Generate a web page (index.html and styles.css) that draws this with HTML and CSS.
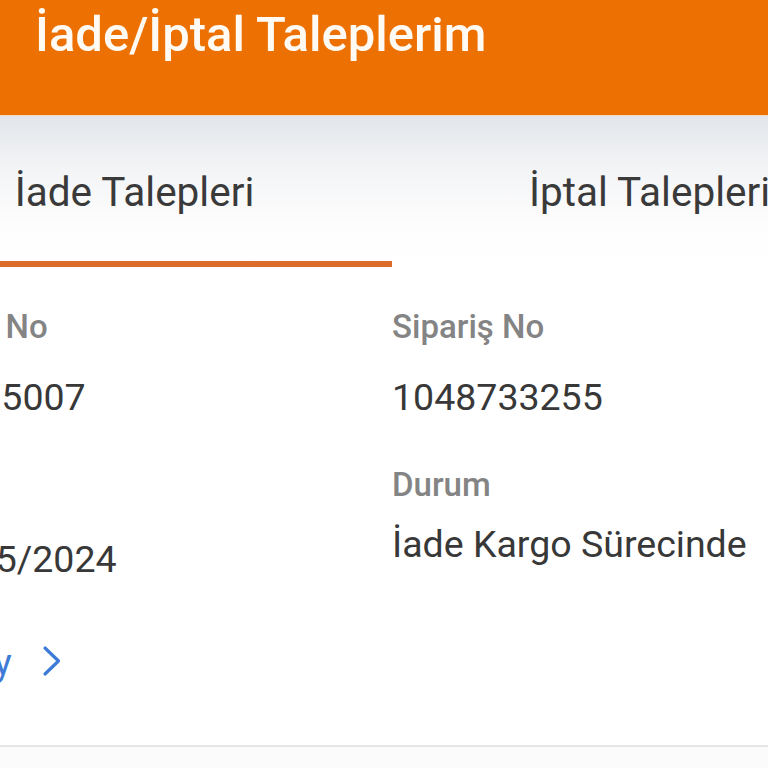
FILE: index.html
```html
<!DOCTYPE html>
<html lang="tr">
<head>
  <meta charset="UTF-8">
  <meta name="viewport" content="width=device-width, initial-scale=1.0">
  <title>İade/İptal Taleplerim</title>
  <link rel="stylesheet" href="styles.css">
</head>
<body>
<div class="screen">
  <header class="app-header">
    <h1>İade/İptal Taleplerim</h1>
  </header>

  <nav class="tabs">
    <div class="tab active">İade Talepleri</div>
    <div class="tab">İptal Talepleri</div>
  </nav>

  <section class="request-card">
    <div class="details">
      <div class="field">
        <span class="field-label">Talep No</span>
        <span class="field-value">10715007</span>
      </div>
      <div class="field">
        <span class="field-label">Sipariş No</span>
        <span class="field-value">1048733255</span>
      </div>
      <div class="field">
        <span class="field-label">Tarih</span>
        <span class="field-value low">12/05/2024</span>
      </div>
      <div class="field">
        <span class="field-label">Durum</span>
        <span class="field-value tight">İade Kargo Sürecinde</span>
      </div>
    </div>

    <a class="detail-link" href="#">
      Detay
      <svg class="chevron" width="20" height="32" viewBox="0 0 20 32">
        <path d="M3 3 L16.5 16 L3 29" fill="none" stroke="currentColor" stroke-width="3.2" stroke-linecap="round" stroke-linejoin="round"/>
      </svg>
    </a>
  </section>
</div>
</body>
</html>
```

FILE: styles.css
```css
* {
  box-sizing: border-box;
  margin: 0;
  padding: 0;
}
:root {
  --orange: #ed7002;
  --orange-line: #dc6b2a;
  --text: #383838;
  --label: #848484;
  --link: #3d7bd6;
  --divider: #e6e6e6;
}

body {
  font-family: Roboto, "Noto Sans", sans-serif;
  background-color: #fbfbfb;
  color: var(--text);
  width: 768px;
  height: 768px;
  overflow: hidden;
}

/* the phone screen is wider than the visible crop */
.screen {
  width: 1030px;
  margin-left: -123px;
}

.app-header {
  height: 115px;
  background-color: var(--orange);
  padding: 6px 0 0 158px;
}

.app-header h1 {
  font-size: 49px;
  line-height: 58px;
  font-weight: 500;
  color: #fffaf3;
}

.tabs {
  display: flex;
  background: linear-gradient(to bottom, #e2e6ea 0, #f3f4f6 35%, #fdfdfd 70%, #fff 100%);
  border-top: 1px solid #f3d7c2;
}

.tab {
  flex: 1;
  text-align: center;
  font-size: 40.5px;
  line-height: 48px;
  color: #3a3a3a;
  padding: 52px 0 51px;
}

.tab.active {
  padding-bottom: 45px;
  border-bottom: 6px solid var(--orange-line);
}

.request-card {
  background-color: #fff;
  padding: 40px 40px 61px;
  border-bottom: 2px solid var(--divider);
}

.details {
  display: grid;
  grid-template-columns: 1fr 1fr;
  row-gap: 46px;
}

.field {
  display: flex;
  flex-direction: column;
  align-items: flex-start;
}

.field-label {
  font-size: 33px;
  line-height: 40px;
  font-weight: 500;
  color: var(--label);
}

.field-value {
  font-size: 37.5px;
  line-height: 44px;
  color: var(--text);
  margin-top: 28px;
}

.field-value.low {
  margin-top: 32px;
}

.field-value.tight {
  margin-top: 17px;
}

.detail-link {
  display: flex;
  align-items: center;
  gap: 30px;
  margin-top: 59px;
  font-size: 37.5px;
  line-height: 44px;
  color: var(--link);
  text-decoration: none;
}

.chevron {
  margin-top: -2px;
}
```
